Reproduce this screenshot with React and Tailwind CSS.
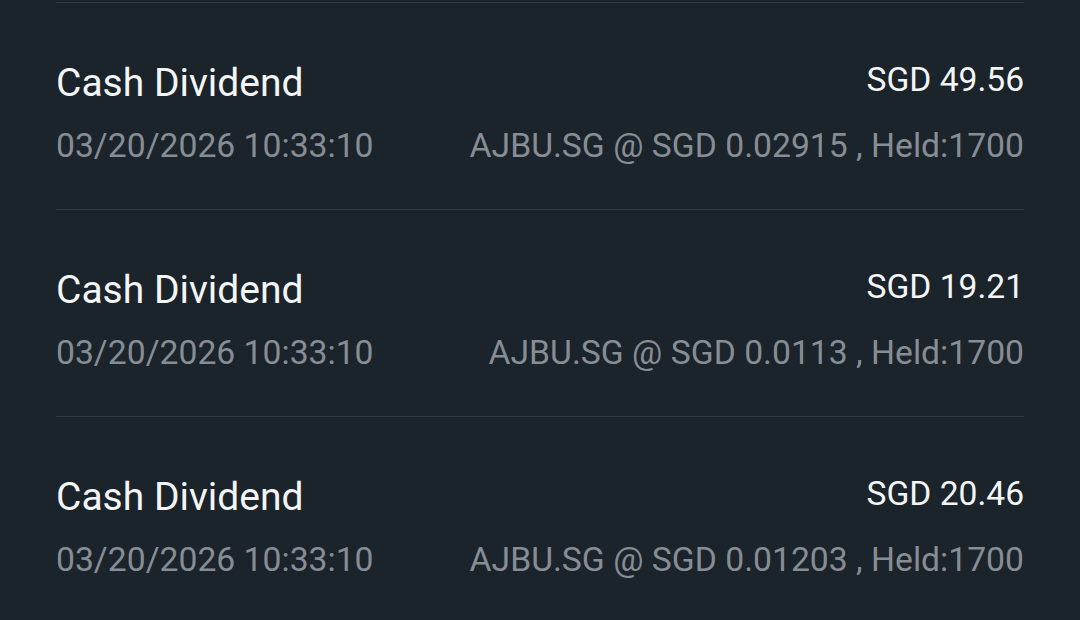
import React from "react";

const rows = [
  { amount: "SGD 49.56", detail: "AJBU.SG @ SGD 0.02915 , Held:1700" },
  { amount: "SGD 19.21", detail: "AJBU.SG @ SGD 0.0113 , Held:1700" },
  { amount: "SGD 20.46", detail: "AJBU.SG @ SGD 0.01203 , Held:1700" },
];

export default function App() {
  return (
    <div
      className="w-[1080px] h-[620px] overflow-hidden bg-[#1b232b] pt-[2px]"
      style={{ fontFamily: "Roboto, 'Noto Sans', sans-serif" }}
    >
      {rows.map((r, i) => (
        <div key={i} className="mx-[56px] border-t border-[#323a42] pt-[56px] pb-[43px]">
          <div className="flex items-start justify-between">
            <div className="text-[39px] leading-[48px] text-[#f4f5f6]">Cash Dividend</div>
            <div className="text-[33.6px] leading-[41px] text-[#f4f5f6]">{r.amount}</div>
          </div>
          <div className="mt-[19px] flex items-start justify-between text-[33.7px] leading-[40px] text-[#878d94]">
            <div>03/20/2026 10:33:10</div>
            <div>{r.detail}</div>
          </div>
        </div>
      ))}
    </div>
  );
}
